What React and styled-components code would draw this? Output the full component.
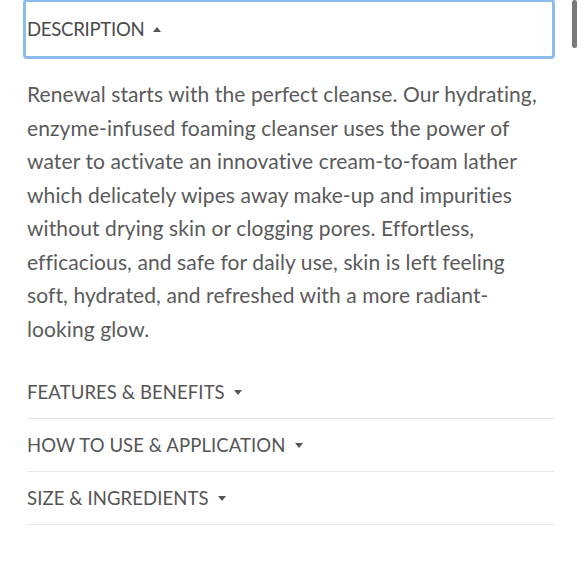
import styled, { createGlobalStyle } from "styled-components";

const GlobalStyle = createGlobalStyle`
  html, body {
    margin: 0;
    background: #ffffff;
  }
  body {
    font-family: "Lato", "Liberation Sans", sans-serif;
    color: #555555;
  }
`;

// copy is set line by line so the ragged edge stays fixed
const description = [
  "Renewal starts with the perfect cleanse. Our hydrating,",
  "enzyme-infused foaming cleanser uses the power of",
  "water to activate an innovative cream-to-foam lather",
  "which delicately wipes away make-up and impurities",
  "without drying skin or clogging pores. Effortless,",
  "efficacious, and safe for daily use, skin is left feeling",
  "soft, hydrated, and refreshed with a more radiant-",
  "looking glow.",
];

const sections = [
  "FEATURES & BENEFITS",
  "HOW TO USE & APPLICATION",
  "SIZE & INGREDIENTS",
];

function App() {
  return (
    <Page>
      <GlobalStyle />
      <Panel>
        <OpenHeader>
          DESCRIPTION <Caret up />
        </OpenHeader>
        <Body>
          {description.map((line) => (
            <Line key={line}>{line}</Line>
          ))}
        </Body>
        {sections.map((title) => (
          <Section key={title}>
            {title} <Caret />
          </Section>
        ))}
      </Panel>
      <Scrollbar />
    </Page>
  );
}

const Page = styled.div`
  position: relative;
  width: 580px;
  height: 580px;
  overflow: hidden;
`;

const Panel = styled.div`
  width: 532px;
  margin-left: 23px;
  margin-top: -1px;
`;

const OpenHeader = styled.div`
  height: 54px;
  border: 3px solid #8cbcec;
  border-radius: 4px;
  padding-left: 1px;
  display: flex;
  align-items: center;
  font-size: 18.6px;
  letter-spacing: -0.3px;
  color: #4a4a4a;
`;

const Caret = styled.span`
  display: inline-block;
  width: 0;
  height: 0;
  margin-left: 9px;
  border-left: 4px solid transparent;
  border-right: 4px solid transparent;
  ${(p) =>
    p.up
      ? "border-bottom: 5px solid #555;"
      : "border-top: 5px solid #555;"}
`;

const Body = styled.p`
  margin: 18px 0 21px 4px;
  font-size: 21px;
  letter-spacing: 0.1px;
  line-height: 33.5px;
  color: #5a5a5a;
`;

const Line = styled.span`
  display: block;
  white-space: nowrap;
`;

const Section = styled.div`
  height: 52px;
  margin-left: 4px;
  display: flex;
  align-items: center;
  border-bottom: 1px solid #e6e6e6;
  font-size: 18.5px;
  letter-spacing: 0.1px;
  color: #555;
`;

const Scrollbar = styled.div`
  position: absolute;
  top: 0;
  right: 3px;
  width: 5px;
  height: 48px;
  border-radius: 3px;
  background: #7a7a7a;
`;

export default App;
